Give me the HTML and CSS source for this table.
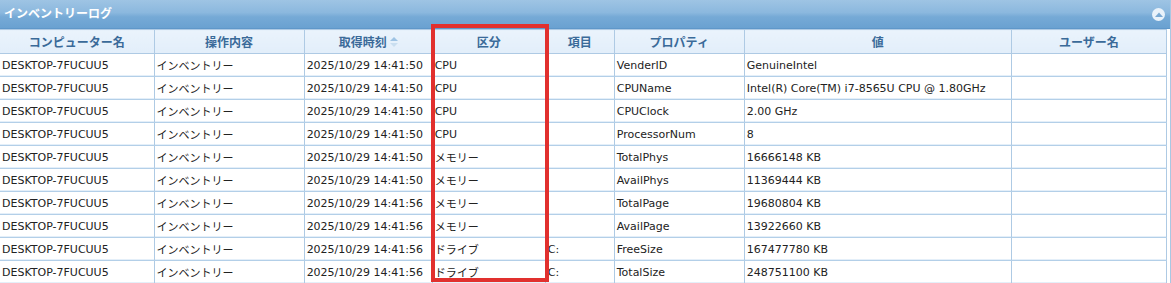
FILE: index.html
```html
<!DOCTYPE html>
<html lang="ja">
<head>
<meta charset="utf-8">
<title>インベントリーログ</title>
<link rel="stylesheet" href="styles.css">
</head>
<body>
<div class="panel">
  <div class="panel-head">
    <span class="panel-title">インベントリーログ</span>
    <span class="collapse"><svg width="8" height="5" viewBox="0 0 8 5"><path d="M0 5 L4 0.5 L8 5 Z" fill="#7aa9d3"/></svg></span>
  </div>
  <div class="grid-wrap">
    <table class="grid">
      <colgroup>
        <col style="width:154px"><col style="width:150px"><col style="width:128px"><col style="width:113px"><col style="width:69px"><col style="width:130px"><col style="width:267px"><col style="width:155px">
      </colgroup>
      <thead>
        <tr>
          <th>コンピューター名</th><th>操作内容</th><th><span class="sorted">取得時刻<svg class="sort" width="8" height="10" viewBox="0 0 8 10"><path d="M0 4 L4 0 L8 4 Z" fill="#9ec3e4"/><path d="M0 6 L4 10 L8 6 Z" fill="#c9def0"/></svg></span></th><th>区分</th><th>項目</th><th>プロパティ</th><th>値</th><th>ユーザー名</th>
        </tr>
      </thead>
      <tbody>
        <tr><td>DESKTOP-7FUCUU5</td><td>インベントリー</td><td>2025/10/29 14:41:50</td><td>CPU</td><td></td><td>VenderID</td><td>GenuineIntel</td><td></td></tr>
        <tr><td>DESKTOP-7FUCUU5</td><td>インベントリー</td><td>2025/10/29 14:41:50</td><td>CPU</td><td></td><td>CPUName</td><td>Intel(R) Core(TM) i7-8565U CPU @ 1.80GHz</td><td></td></tr>
        <tr><td>DESKTOP-7FUCUU5</td><td>インベントリー</td><td>2025/10/29 14:41:50</td><td>CPU</td><td></td><td>CPUClock</td><td>2.00 GHz</td><td></td></tr>
        <tr><td>DESKTOP-7FUCUU5</td><td>インベントリー</td><td>2025/10/29 14:41:50</td><td>CPU</td><td></td><td>ProcessorNum</td><td>8</td><td></td></tr>
        <tr><td>DESKTOP-7FUCUU5</td><td>インベントリー</td><td>2025/10/29 14:41:50</td><td>メモリー</td><td></td><td>TotalPhys</td><td>16666148 KB</td><td></td></tr>
        <tr><td>DESKTOP-7FUCUU5</td><td>インベントリー</td><td>2025/10/29 14:41:50</td><td>メモリー</td><td></td><td>AvailPhys</td><td>11369444 KB</td><td></td></tr>
        <tr><td>DESKTOP-7FUCUU5</td><td>インベントリー</td><td>2025/10/29 14:41:56</td><td>メモリー</td><td></td><td>TotalPage</td><td>19680804 KB</td><td></td></tr>
        <tr><td>DESKTOP-7FUCUU5</td><td>インベントリー</td><td>2025/10/29 14:41:56</td><td>メモリー</td><td></td><td>AvailPage</td><td>13922660 KB</td><td></td></tr>
        <tr><td>DESKTOP-7FUCUU5</td><td>インベントリー</td><td>2025/10/29 14:41:56</td><td>ドライブ</td><td>C:</td><td>FreeSize</td><td>167477780 KB</td><td></td></tr>
        <tr><td>DESKTOP-7FUCUU5</td><td>インベントリー</td><td>2025/10/29 14:41:56</td><td>ドライブ</td><td>C:</td><td>TotalSize</td><td>248751100 KB</td><td></td></tr>
      </tbody>
    </table>
    <div class="highlight"></div>
  </div>
</div>
</body>
</html>
```

FILE: styles.css
```css
html, body {
  margin: 0;
  padding: 0;
  background: #ffffff;
}
body {
  font-family: "DejaVu Sans", "Noto Sans CJK JP", sans-serif;
  font-size: 11px;
  color: #222;
}
.panel {
  width: 1171px;
  box-sizing: border-box;
  border-right: 1px solid #a9c8e3;
  position: relative;
}
.panel-head {
  height: 29px;
  box-sizing: border-box;
  display: flex;
  align-items: center;
  justify-content: space-between;
  padding: 0 5px 0 4px;
  background: linear-gradient(#9ec4e4 0%, #8bb8de 45%, #76aad6 60%, #6aa1d1 100%);
  border-bottom: 1px solid #5f97c9;
}
.panel-title {
  color: #ffffff;
  font-family: "Noto Sans CJK JP", sans-serif;
  font-weight: bold;
  font-size: 12px;
  margin-top: -3px;
}
.collapse {
  width: 13px;
  height: 13px;
  border-radius: 50%;
  background: #e9f2fa;
  display: flex;
  align-items: center;
  justify-content: center;
}
.grid-wrap {
  position: relative;
  width: 1167px;
}
.grid {
  table-layout: fixed;
  border-collapse: collapse;
  width: 1167px;
}
.grid th, .grid td {
  border: 1px solid #aecae4;
  padding: 0 2px;
  white-space: nowrap;
  overflow: visible;
  height: 23px;
  box-sizing: border-box;
  text-align: left;
}
.grid th:first-child, .grid td:first-child {
  border-left: none;
}
.grid th {
  background: linear-gradient(#eaf3fc, #e2eefa);
  color: #3a6a99;
  font-family: "Noto Sans CJK JP", sans-serif;
  font-weight: bold;
  font-size: 12px;
  text-align: center;
  height: 24px;
}
.grid td {
  border-bottom-color: #b3cfe8;
  box-shadow: inset 0 -1px 0 #e4eff9;
}
.sorted {
  display: inline-flex;
  align-items: center;
  gap: 3px;
}
.sort {
  display: block;
}
.highlight {
  position: absolute;
  left: 431px;
  top: -5px;
  width: 118px;
  height: 258px;
  box-sizing: border-box;
  border: 4px solid #e1302e;
  pointer-events: none;
}
```
